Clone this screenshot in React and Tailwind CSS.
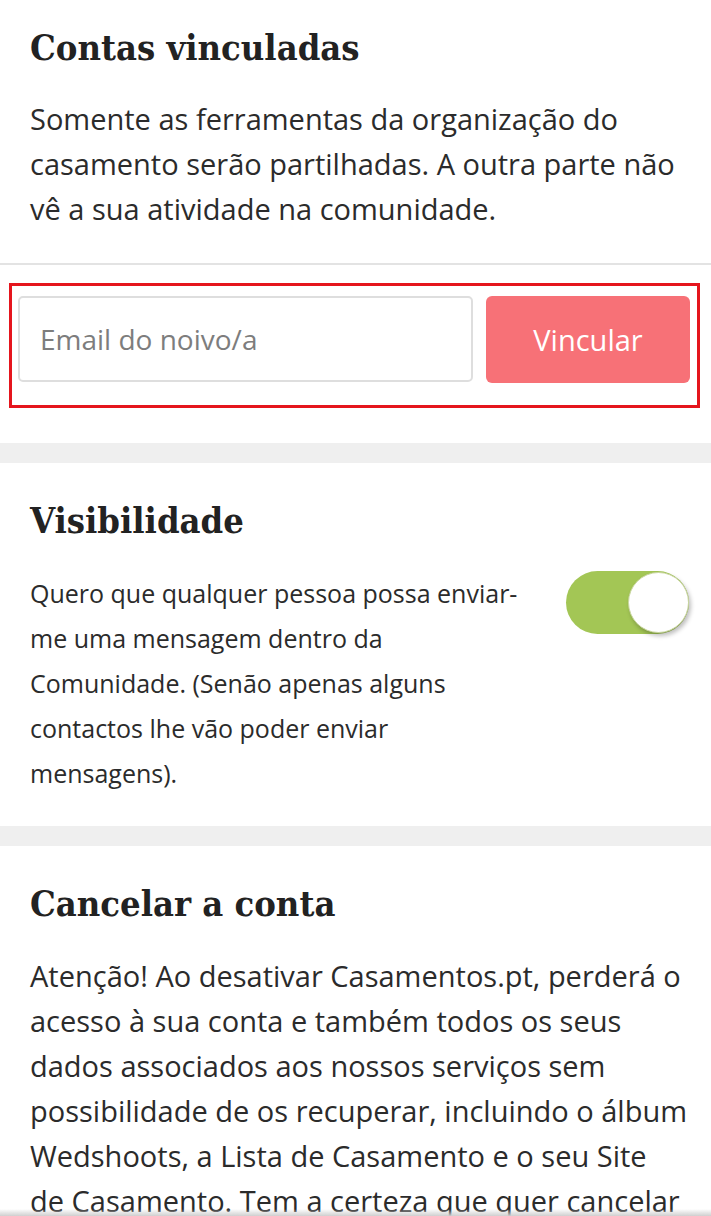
export default function App() {
  const serif = { fontFamily: '"DejaVu Serif Condensed", "DejaVu Serif", serif' };
  return (
    <div className="relative min-h-[1216px] bg-white text-[#2b2b2b]" style={{ fontFamily: '"Open Sans", "Noto Sans", sans-serif' }}>
      {/* Contas vinculadas */}
      <section className="px-[30px] pt-[25px] pb-[32px] border-b-2 border-[#e3e3e3]">
        <h2 className="text-[36px] leading-[44px] font-bold text-[#222] font-stretch-condensed" style={serif}>
          Contas vinculadas
        </h2>
        <p className="mt-[27px] text-[29px] leading-[45px]">
          Somente as ferramentas da organização do casamento serão partilhadas. A outra parte não vê a sua atividade na comunidade.
        </p>
      </section>

      <div className="pl-[9px] pr-[11px] pt-[18px] pb-[35px]">
        <div className="flex gap-[13px] border-[3px] border-[#e5151d] pl-[6px] pr-[7px] pt-[10px] pb-[22px]">
          <div className="flex h-[86px] w-[455px] shrink-0 items-center rounded-[5px] border-2 border-[#dedede] pl-[20px] text-[28px] text-[#7d7d7d]">
            Email do noivo/a
          </div>
          <button className="flex h-[87px] flex-1 items-center justify-center rounded-[6px] bg-[#f77177] text-[29px] font-medium text-white">
            Vincular
          </button>
        </div>
      </div>

      <div className="h-[20px] bg-[#efefef]" />

      {/* Visibilidade */}
      <section className="pl-[30px] pr-[21px] pt-[35px] pb-[30px]">
        <h2 className="text-[36px] leading-[44px] font-bold text-[#222] font-stretch-condensed" style={serif}>
          Visibilidade
        </h2>
        <div className="mt-[29px] flex items-start">
          <p className="w-[500px] shrink-0 text-[25px] leading-[45px]">
            Quero que qualquer pessoa possa enviar-me uma mensagem dentro da Comunidade. (Senão apenas alguns contactos lhe vão poder enviar mensagens).
          </p>
          <div className="ml-[36px] relative h-[63px] w-[123px] shrink-0 rounded-full bg-[#a3c655]">
            <div className="absolute right-0 top-[1px] h-[61px] w-[61px] rounded-full border border-[#c9d6a0] bg-white shadow-[2px_3px_4px_rgba(0,0,0,0.25)]" />
          </div>
        </div>
      </section>

      <div className="h-[20px] bg-[#efefef]" />

      {/* Cancelar a conta */}
      <section className="pl-[30px] pr-[22px] pt-[35px] pb-[40px]">
        <h2 className="text-[36px] leading-[44px] font-bold text-[#222] font-stretch-condensed" style={serif}>
          Cancelar a conta
        </h2>
        <p className="mt-[28px] text-[29px] leading-[45px]">
          Atenção! Ao desativar Casamentos.pt, perderá o acesso à sua conta e também todos os seus dados associados aos nossos serviços sem possibilidade de os recuperar, incluindo o álbum Wedshoots, a Lista de Casamento e o seu Site de{"\u00a0"}Casamento. Tem a certeza que quer cancelar a sua conta?
        </p>
      </section>

      <div className="pointer-events-none fixed bottom-0 left-0 right-0 h-[7px] bg-gradient-to-t from-[#cfcfcf] to-transparent" />
    </div>
  );
}
